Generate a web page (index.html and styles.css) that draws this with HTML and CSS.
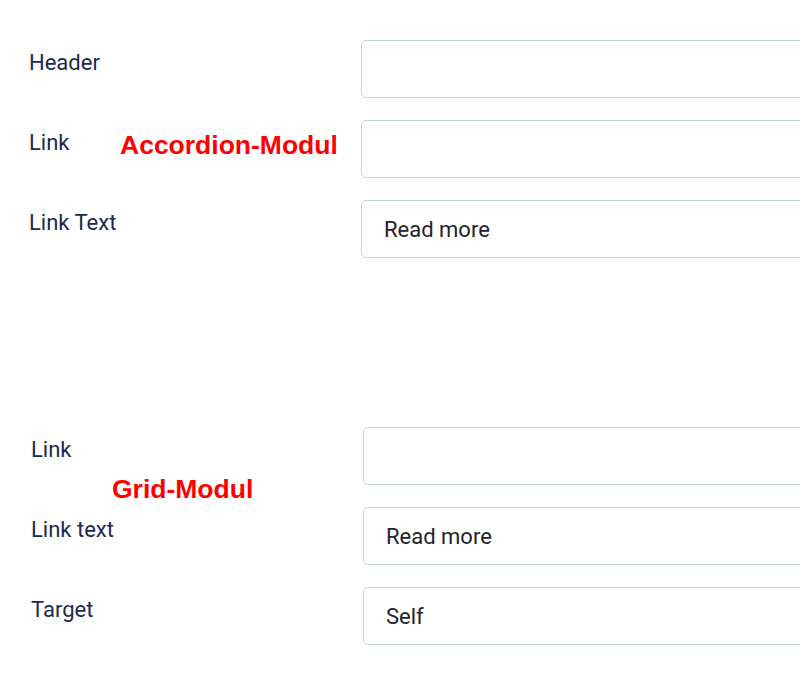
FILE: index.html
```html
<!DOCTYPE html>
<html lang="en">
<head>
<meta charset="utf-8">
<title>Modules</title>
<link rel="stylesheet" href="styles.css">
</head>
<body>
<section class="form accordion">
  <div class="row">
    <label class="label" for="a-header">Header</label>
    <input class="field" id="a-header" type="text" value="">
  </div>
  <div class="row">
    <label class="label" for="a-link">Link</label>
    <input class="field" id="a-link" type="text" value="">
  </div>
  <div class="row">
    <label class="label" for="a-text">Link Text</label>
    <input class="field" id="a-text" type="text" value="Read more">
  </div>
  <span class="note note-accordion">Accordion-Modul</span>
</section>

<section class="form grid">
  <div class="row">
    <label class="label" for="g-link">Link</label>
    <input class="field" id="g-link" type="text" value="">
  </div>
  <div class="row">
    <label class="label" for="g-text">Link text</label>
    <input class="field" id="g-text" type="text" value="Read more">
  </div>
  <div class="row">
    <label class="label" for="g-target">Target</label>
    <input class="field" id="g-target" type="text" value="Self">
  </div>
  <span class="note note-grid">Grid-Modul</span>
</section>
</body>
</html>
```

FILE: styles.css
```css
html, body {
  margin: 0;
  padding: 0;
  background: #ffffff;
  overflow: hidden;
}

body {
  width: 800px;
  height: 687px;
  font-family: Roboto, "Liberation Sans", sans-serif;
}

.form {
  position: relative;
  box-sizing: border-box;
  width: 800px;
  overflow: hidden;
  display: flex;
  flex-direction: column;
  gap: 22px;
}

.accordion {
  padding: 40px 0 0 29px;
}

.grid {
  margin-top: 169px;
  padding-left: 31px;
}

.row {
  display: grid;
  grid-template-columns: 332px 480px;
  align-items: start;
}

.label {
  font-size: 22px;
  line-height: 26px;
  padding-top: 10px;
  color: #1b2a50;
}

.field {
  box-sizing: border-box;
  height: 58px;
  width: 480px;
  margin: 0;
  padding: 0 0 0 22px;
  border: 1px solid #c5d2e8;
  border-radius: 5px;
  background: #ffffff;
  font-family: Roboto, "Liberation Sans", sans-serif;
  font-size: 22px;
  color: #1f2328;
  outline: none;
}

.note {
  position: absolute;
  font-family: "Liberation Sans", Arial, sans-serif;
  font-weight: bold;
  font-size: 26.5px;
  line-height: 30px;
  color: #ff0000;
  white-space: nowrap;
}

.note-accordion {
  left: 120px;
  top: 130px;
}

.note-grid {
  left: 112px;
  top: 47px;
}
```
